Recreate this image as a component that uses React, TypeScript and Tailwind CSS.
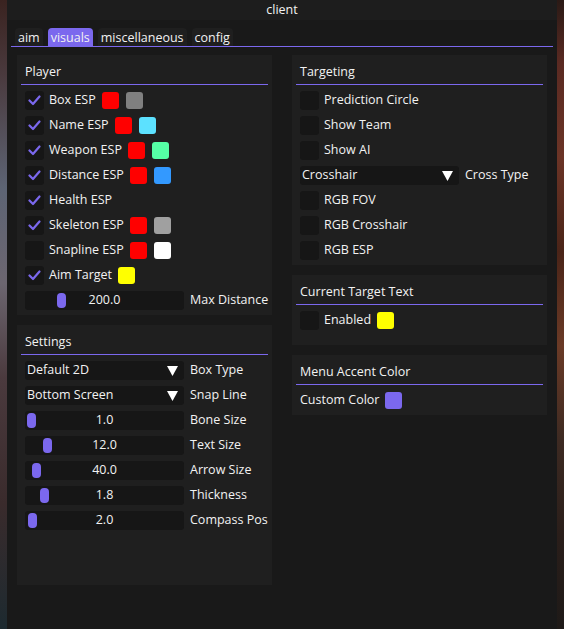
import React from "react"

const FONT = { fontFamily: '"Open Sans", "Noto Sans", sans-serif' }

function Check({ on }: { on?: boolean }) {
  return (
    <div className="flex h-[19px] w-[19px] shrink-0 items-center justify-center rounded-[3px] bg-[#161616]">
      {on && (
        <svg width="13" height="11" viewBox="0 0 13 11" fill="none">
          <path d="M1.5 5.5 L5 9 L11.5 1.5" stroke="#7b68ee" strokeWidth="2.2" strokeLinecap="round" strokeLinejoin="round" />
        </svg>
      )}
    </div>
  )
}

function Swatch({ color }: { color: string }) {
  return <div className="h-[17px] w-[17px] shrink-0 rounded-[3px]" style={{ backgroundColor: color }} />
}

function CheckRow({ label, on, colors = [] }: { label: string; on?: boolean; colors?: string[] }) {
  return (
    <div className="flex h-[19px] items-center whitespace-nowrap">
      <Check on={on} />
      <span className="ml-[5px] mr-[6px]">{label}</span>
      <div className="flex gap-[7px]">
        {colors.map((c, i) => (
          <Swatch key={i} color={c} />
        ))}
      </div>
    </div>
  )
}

function Slider({ value, pos, label }: { value: string; pos: number; label: string }) {
  return (
    <div className="flex h-[19px] items-center whitespace-nowrap">
      <div className="relative flex h-[19px] w-[159px] shrink-0 items-center justify-center rounded-[3px] bg-[#161616]">
        <div className="absolute top-[2px] h-[15px] w-[9px] rounded-[4px] bg-[#7b68ee]" style={{ left: pos }} />
        <span className="relative">{value}</span>
      </div>
      <span className="ml-[6px]">{label}</span>
    </div>
  )
}

function Combo({ value, label }: { value: string; label: string }) {
  return (
    <div className="flex h-[19px] items-center whitespace-nowrap">
      <div className="flex h-[19px] w-[159px] shrink-0 items-center justify-between rounded-[3px] bg-[#161616] pl-[2px] pr-[6px]">
        <span>{value}</span>
        <svg width="11" height="10" viewBox="0 0 11 10">
          <path d="M0 0 H11 L5.5 10 Z" fill="#ffffff" />
        </svg>
      </div>
      <span className="ml-[6px]">{label}</span>
    </div>
  )
}

function Panel({ title, className, children }: { title: string; className?: string; children: React.ReactNode }) {
  return (
    <div className={"flex flex-col bg-[#1f1f1f] px-[4px] " + (className ?? "")}>
      <div className="h-[29px] whitespace-nowrap pl-[4px] pt-[9px] leading-[16px]">{title}</div>
      <div className="h-px bg-[#7b68ee]" />
      <div className="flex flex-col gap-[6px] px-[4px] pt-[6px]">{children}</div>
    </div>
  )
}

export default function App() {
  return (
    <div
      className="relative flex h-[629px] w-[564px] overflow-hidden text-[12.5px] text-[#f2f2f2]"
      style={FONT}
    >
      <div className="w-[7px] shrink-0 bg-[linear-gradient(180deg,#3a2320_0%,#4a3a3e_12%,#5d6474_30%,#6c6670_45%,#4b3a3e_60%,#3a2b2c_80%,#1d2a30_100%)]" />
      <div className="flex w-[550px] shrink-0 flex-col bg-[#191919]">
        <div className="flex h-[20px] items-center justify-center bg-[#1d1d1d] pt-[1px] leading-none">client</div>
        <div className="mx-[4px] mt-[8px] flex gap-[5px] border-b border-[#7b68ee] pl-[4px]">
          <div className="rounded-t-[4px] bg-[#1f1f1f] px-[3px] pt-px leading-[17px]">aim</div>
          <div className="rounded-t-[4px] bg-[#7b68ee] px-[3px] pt-px leading-[17px]">visuals</div>
          <div className="rounded-t-[4px] bg-[#1f1f1f] px-[3px] pt-px leading-[17px]">miscellaneous</div>
          <div className="rounded-t-[4px] bg-[#1f1f1f] px-[3px] pt-px leading-[17px]">config</div>
        </div>
        <div className="mt-[8px] flex gap-[20px] pl-[10px]">
          <div className="flex w-[255px] flex-col gap-[10px]">
            <Panel title="Player" className="h-[260px]">
              <CheckRow label="Box ESP" on colors={["#ff0000", "#808080"]} />
              <CheckRow label="Name ESP" on colors={["#ff0000", "#5ce1ff"]} />
              <CheckRow label="Weapon ESP" on colors={["#ff0000", "#55ffa5"]} />
              <CheckRow label="Distance ESP" on colors={["#ff0000", "#3399ff"]} />
              <CheckRow label="Health ESP" on />
              <CheckRow label="Skeleton ESP" on colors={["#ff0000", "#a0a0a0"]} />
              <CheckRow label="Snapline ESP" colors={["#ff0000", "#ffffff"]} />
              <CheckRow label="Aim Target" on colors={["#ffff00"]} />
              <Slider value="200.0" pos={32} label="Max Distance" />
            </Panel>
            <Panel title="Settings" className="h-[260px]">
              <Combo value="Default 2D" label="Box Type" />
              <Combo value="Bottom Screen" label="Snap Line" />
              <Slider value="1.0" pos={2} label="Bone Size" />
              <Slider value="12.0" pos={18} label="Text Size" />
              <Slider value="40.0" pos={7} label="Arrow Size" />
              <Slider value="1.8" pos={15} label="Thickness" />
              <Slider value="2.0" pos={3} label="Compass Pos" />
            </Panel>
          </div>
          <div className="flex w-[255px] flex-col gap-[10px]">
            <Panel title="Targeting" className="h-[210px]">
              <CheckRow label="Prediction Circle" />
              <CheckRow label="Show Team" />
              <CheckRow label="Show AI" />
              <Combo value="Crosshair" label="Cross Type" />
              <CheckRow label="RGB FOV" />
              <CheckRow label="RGB Crosshair" />
              <CheckRow label="RGB ESP" />
            </Panel>
            <Panel title="Current Target Text" className="h-[70px]">
              <CheckRow label="Enabled" colors={["#ffff00"]} />
            </Panel>
            <Panel title="Menu Accent Color" className="h-[60px]">
              <div className="flex h-[17px] items-center whitespace-nowrap pt-[1px]">
                <span className="mr-[6px]">Custom Color</span>
                <Swatch color="#7b68ee" />
              </div>
            </Panel>
          </div>
        </div>
      </div>
      <div className="w-[7px] shrink-0 bg-[linear-gradient(180deg,#2a1a16_0%,#5a2a22_10%,#6b3426_25%,#4a2418_40%,#6a3a26_55%,#3d2a22_70%,#2a1e1a_85%,#1e1a18_100%)]" />
    </div>
  )
}
